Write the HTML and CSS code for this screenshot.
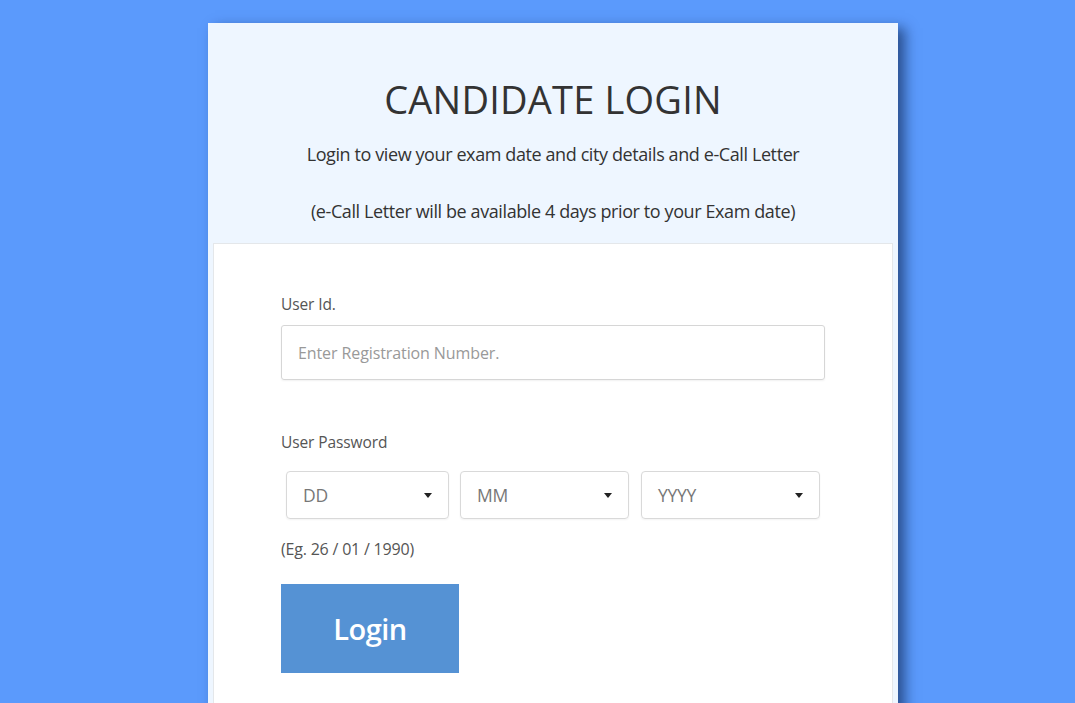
FILE: index.html
```html
<!DOCTYPE html>
<html>
<head>
<meta charset="utf-8">
<link rel="stylesheet" href="styles.css">
</head>
<body>
<div class="card">
  <div class="card-head">
    <h1 class="title">CANDIDATE LOGIN</h1>
    <p class="sub">Login to view your exam date and city details and e-Call Letter</p>
    <p class="sub sub2">(e-Call Letter will be available 4 days prior to your Exam date)</p>
  </div>
  <div class="panel">
    <label class="lbl">User Id.</label>
    <div class="input">Enter Registration Number.</div>
    <label class="lbl lbl-pw">User Password</label>
    <div class="selects">
      <div class="sel sel-dd"><span>DD</span><i class="caret"></i></div>
      <div class="sel sel-mm"><span>MM</span><i class="caret"></i></div>
      <div class="sel sel-yy"><span>YYYY</span><i class="caret"></i></div>
    </div>
    <div class="hint">(Eg. 26 / 01 / 1990)</div>
    <button class="btn">Login</button>
  </div>
</div>
</body>
</html>
```
FILE: styles.css
```css
html, body {
  margin: 0;
  padding: 0;
  height: 100%;
  overflow: hidden;
}
body {
  background: #5b9afc;
  font-family: "Open Sans", "Noto Sans", sans-serif;
}
.card {
  margin: 23px 0 0 208px;
  width: 690px;
  height: 720px;
  background: #eef6ff;
  box-shadow: 7px 5px 12px rgba(10, 30, 70, 0.6);
  box-sizing: border-box;
  display: flex;
  flex-direction: column;
}
.card-head {
  text-align: center;
  padding-top: 52px;
  height: 220px;
  box-sizing: border-box;
}
.title {
  margin: 0;
  font-weight: 400;
  font-size: 38px;
  line-height: 48px;
  color: #333;
  letter-spacing: 0.2px;
}
.sub {
  margin: 19px 0 0;
  font-size: 18px;
  line-height: 24px;
  color: #333;
  letter-spacing: -0.4px;
}
.sub2 {
  margin-top: 33px;
}
.panel {
  flex: 1;
  margin: 0 5px;
  background: #fff;
  border: 1px solid #e4e7ea;
  border-bottom: none;
  padding: 50px 66px 0 67px;
  display: flex;
  flex-direction: column;
  align-items: flex-start;
}
.lbl {
  font-size: 15.5px;
  line-height: 20px;
  color: #555;
  letter-spacing: -0.1px;
}
.input {
  margin-top: 11px;
  width: 544px;
  height: 55px;
  box-sizing: border-box;
  border: 1px solid #d6d6d6;
  border-radius: 3px;
  box-shadow: 0 1px 2px rgba(0,0,0,0.06);
  padding-left: 16px;
  display: flex;
  align-items: center;
  font-size: 16px;
  color: #999;
  letter-spacing: -0.1px;
}
.lbl-pw {
  margin-top: 52px;
}
.selects {
  margin-top: 19px;
  margin-left: 5px;
  display: flex;
  gap: 11px;
}
.sel {
  height: 48px;
  box-sizing: border-box;
  border: 1px solid #d9d9d9;
  border-radius: 4px;
  box-shadow: 0 1px 2px rgba(0,0,0,0.05);
  display: flex;
  align-items: center;
  justify-content: space-between;
  padding: 0 16px 0 16px;
  font-size: 17.5px;
  color: #777;
  letter-spacing: -0.3px;
}
.sel-dd { width: 163px; }
.sel-mm { width: 169px; padding-right: 16px; }
.sel-yy { width: 179px; margin-left: 1px; }
.caret {
  width: 0;
  height: 0;
  border-left: 4.5px solid transparent;
  border-right: 4.5px solid transparent;
  border-top: 5px solid #222;
}
.hint {
  margin-top: 20px;
  font-size: 16px;
  line-height: 20px;
  color: #555;
  letter-spacing: -0.2px;
}
.btn {
  margin-top: 25px;
  width: 178px;
  height: 89px;
  border: none;
  background: #5592d4;
  color: #fff;
  font-family: "Open Sans", "Noto Sans", sans-serif;
  font-size: 29px;
  font-weight: 600;
  letter-spacing: -0.5px;
  padding: 0;
}
```
